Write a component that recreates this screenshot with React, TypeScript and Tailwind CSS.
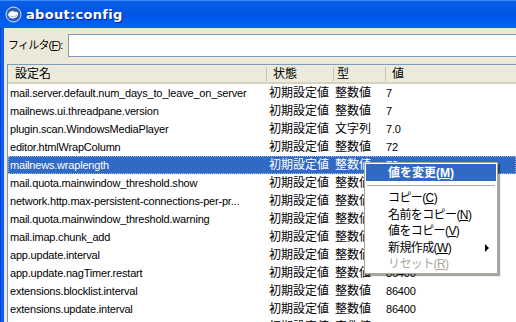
import React from 'react'

type Pref = { name: string; state: string; type: string; value: string; selected?: boolean }

const prefs: Pref[] = [
  { name: 'mail.server.default.num_days_to_leave_on_server', state: '初期設定値', type: '整数値', value: '7' },
  { name: 'mailnews.ui.threadpane.version', state: '初期設定値', type: '整数値', value: '7' },
  { name: 'plugin.scan.WindowsMediaPlayer', state: '初期設定値', type: '文字列', value: '7.0' },
  { name: 'editor.htmlWrapColumn', state: '初期設定値', type: '整数値', value: '72' },
  { name: 'mailnews.wraplength', state: '初期設定値', type: '整数値', value: '72', selected: true },
  { name: 'mail.quota.mainwindow_threshold.show', state: '初期設定値', type: '整数値', value: '75' },
  { name: 'network.http.max-persistent-connections-per-pr...', state: '初期設定値', type: '整数値', value: '8' },
  { name: 'mail.quota.mainwindow_threshold.warning', state: '初期設定値', type: '整数値', value: '90' },
  { name: 'mail.imap.chunk_add', state: '初期設定値', type: '整数値', value: '2048' },
  { name: 'app.update.interval', state: '初期設定値', type: '整数値', value: '86400' },
  { name: 'app.update.nagTimer.restart', state: '初期設定値', type: '整数値', value: '86400' },
  { name: 'extensions.blocklist.interval', state: '初期設定値', type: '整数値', value: '86400' },
  { name: 'extensions.update.interval', state: '初期設定値', type: '整数値', value: '86400' },
  { name: 'extensions.update.notifyUser', state: '初期設定値', type: '真偽値', value: 'true' },
]

const font = { fontFamily: '"Liberation Sans", "Noto Sans CJK JP", sans-serif' }

const Key = ({ k }: { k: string }) => <span className="underline">{k}</span>

const GlobeIcon = () => (
  <svg width="17" height="17" viewBox="0 0 17 17">
    <circle cx="8.5" cy="8.5" r="7.5" fill="#2f5fb8" stroke="#dfe8f7" strokeWidth="1" />
    <path d="M3 9 C4 5 8 4 10 6 C12 5 14 7 13 9 C12 12 8 13 5 12 Z" fill="#ffffff" />
    <path d="M5 10 C7 11 10 11 12 9" fill="none" stroke="#9db3d9" strokeWidth="1" />
  </svg>
)

export default function App() {
  return (
    <div
      className="relative w-[516px] h-[322px] overflow-hidden flex flex-col bg-[#ECE9D8] text-[12px] text-black"
      style={font}
    >
      {/* title bar */}
      <div className="h-[28px] shrink-0 flex items-center gap-[4px] pl-[5px] bg-gradient-to-b from-[#0A5FE6] via-[#0054E3] to-[#0064FA] border-t border-[#3D8AF7]">
        <GlobeIcon />
        <span
          className="text-white font-bold text-[13px] tracking-[0.3px] [text-shadow:1px_1px_0_#0a1e8a]"
          style={{ fontFamily: '"DejaVu Sans", "Liberation Sans", sans-serif' }}
        >
          about:config
        </span>
      </div>

      <div className="flex flex-1 min-h-0">
        <div className="w-[4px] bg-gradient-to-r from-[#0831D9] via-[#166AEE] to-[#0055EA]" />
        <div className="flex-1 flex flex-col min-w-0 pl-[3px]">
          {/* filter */}
          <div className="flex items-center mt-[6px] h-[23px] shrink-0">
            <span className="w-[61px] shrink-0 pl-[1px] whitespace-nowrap text-[11px] tracking-[-0.8px]">
              フィルタ(<Key k="F" />):
            </span>
            <div className="flex-1 h-[23px] bg-white border border-[#7F9DB9] border-r-0" />
          </div>

          {/* tree */}
          <div className="mt-[7px] flex-1 flex flex-col border-l border-t border-[#7F9DB9] bg-white min-h-0">
            <div className="h-[19px] flex items-center bg-[#EBEADB] border-b-[2px] border-[#D6D2C2] shrink-0">
              <div className="w-[258px] pl-[7px]">設定名</div>
              <div className="w-[67px] flex items-center">
                <span className="w-[1px] h-[14px] bg-[#C7C5B2] mr-[6px]" />
                状態
              </div>
              <div className="w-[52px] flex items-center">
                <span className="w-[1px] h-[14px] bg-[#C7C5B2] mr-[3px]" />
                型
              </div>
              <div className="flex-1 flex items-center">
                <span className="w-[1px] h-[14px] bg-[#C7C5B2] mr-[6px]" />
                値
              </div>
            </div>
            <div className="flex flex-col">
              {prefs.map((p) => (
                <div
                  key={p.name}
                  className={`h-[18px] shrink-0 flex items-center whitespace-nowrap ${
                    p.selected ? 'bg-[#316AC5] text-white outline-1 outline-dotted outline-offset-[-1px] outline-[#9fb8e4]' : ''
                  }`}
                >
                  <div className="w-[258px] pl-[2px] overflow-hidden text-[11px] tracking-[-0.2px]">{p.name}</div>
                  <div className="w-[67px] pl-[3px]">{p.state}</div>
                  <div className="w-[52px] pl-[2px]">{p.type}</div>
                  <div className="flex-1 pl-[1px] text-[11px] tracking-[-0.2px]">{p.value}</div>
                </div>
              ))}
            </div>
          </div>
        </div>
      </div>

      {/* context menu */}
      <div className="absolute left-[364px] top-[162px] w-[134px] bg-white border border-[#ACA899] py-[1px] px-[1px] shadow-[2px_2px_1px_rgba(0,0,0,0.35)] whitespace-nowrap tracking-[-0.6px]">
        <div className="h-[17px] flex items-center bg-[#316AC5] text-white font-bold pl-[22px] tracking-[0px]">
          値を変更(<Key k="M" />)
        </div>
        <div className="h-[9px] flex items-center px-[1px]">
          <div className="w-full h-[1px] bg-[#ACA899]" />
        </div>
        <div className="h-[16px] flex items-center pl-[22px]">
          コピー(<Key k="C" />)
        </div>
        <div className="h-[17px] flex items-center pl-[22px]">
          名前をコピー(<Key k="N" />)
        </div>
        <div className="h-[16px] flex items-center pl-[22px]">
          値をコピー(<Key k="V" />)
        </div>
        <div className="h-[17px] flex items-center pl-[22px] pr-[7px]">
          <span className="flex-1">
            新規作成(<Key k="W" />)
          </span>
          <span className="w-0 h-0 border-y-[4px] border-y-transparent border-l-[4px] border-l-black" />
        </div>
        <div className="h-[16px] flex items-center pl-[22px] text-[#ACA899]">
          リセット(<Key k="R" />)
        </div>
      </div>
    </div>
  )
}
